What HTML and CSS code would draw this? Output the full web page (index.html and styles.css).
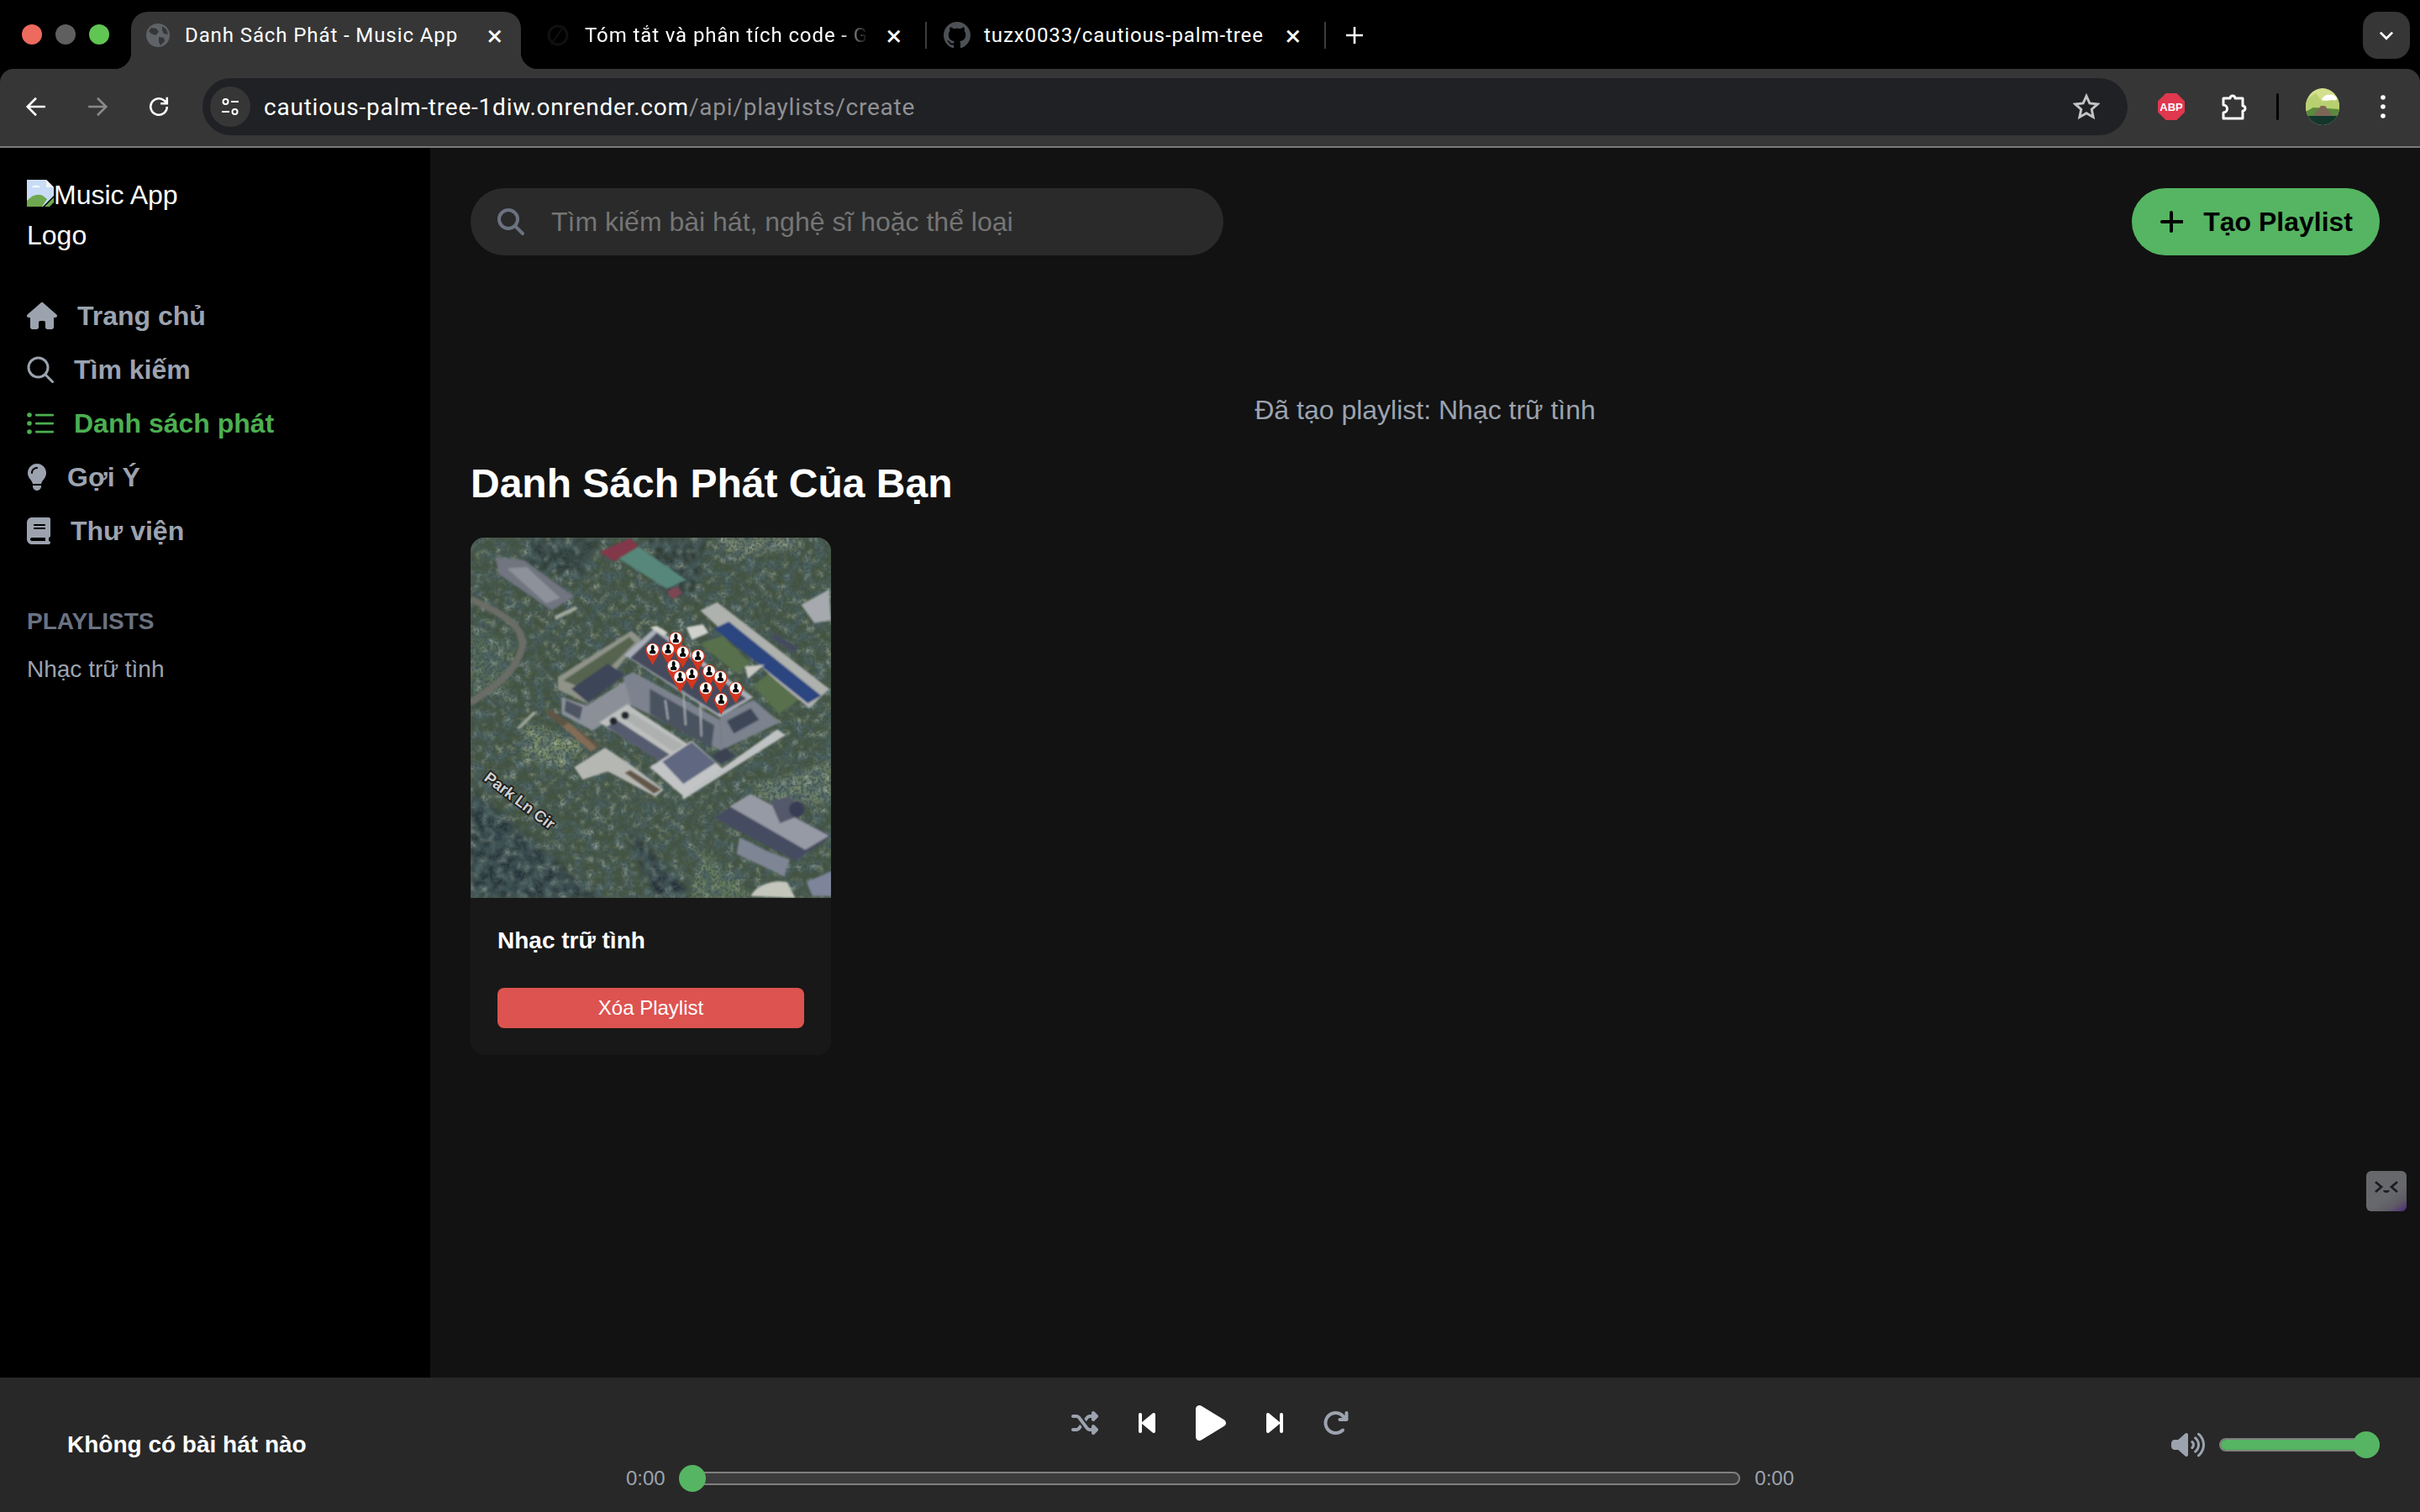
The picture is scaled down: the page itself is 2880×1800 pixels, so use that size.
FILE: index.html
```html
<!DOCTYPE html>
<html>
<head>
    <title>Danh Sách Phát - Music App</title>
    <link rel="stylesheet" href="styles.css">
</head>
<body>
    <div class="tabstrip">
        <div class="lights">
            <span class="light red"></span>
            <span class="light gray"></span>
            <span class="light green"></span>
        </div>
        <div class="tab active">
            <svg class="favicon" viewBox="0 0 28 28"><circle cx="14" cy="14" r="14" fill="#5f6368"/><path d="M6 5l6 1 3 4-4 4-5-2-3-3zM15 16l6 1 1 4-5 5-2-4zM19 3l5 4 2 6-5-1-2-4z" fill="#363636"/></svg>
            <span class="tab-title">Danh Sách Phát - Music App</span>
            <span class="tab-close">×</span>
        </div>
        <div class="tab second">
            <svg class="favicon" viewBox="0 0 28 28"><circle cx="14" cy="14" r="11" fill="none" stroke="#101010" stroke-width="3"/><path d="M6 25L21 3" stroke="#101010" stroke-width="2"/></svg>
            <span class="tab-title faded">Tóm tắt và phân tích code - G</span>
            <span class="tab-close">×</span>
        </div>
        <div class="tab third">
            <svg class="favicon github" viewBox="0 0 16 16"><path fill="#4d5055" d="M8 0C3.58 0 0 3.58 0 8c0 3.54 2.29 6.53 5.47 7.59.4.07.55-.17.55-.38 0-.19-.01-.82-.01-1.49-2.01.37-2.53-.49-2.69-.94-.09-.23-.48-.94-.82-1.13-.28-.15-.68-.52-.01-.53.63-.01 1.08.58 1.23.82.72 1.21 1.87.87 2.33.66.07-.52.28-.87.51-1.07-1.78-.2-3.64-.89-3.64-3.95 0-.87.31-1.59.82-2.15-.08-.2-.36-1.02.08-2.12 0 0 .67-.21 2.2.82.64-.18 1.32-.27 2-.27.68 0 1.36.09 2 .27 1.53-1.04 2.2-.82 2.2-.82.44 1.1.16 1.92.08 2.12.51.56.82 1.27.82 2.15 0 3.07-1.87 3.75-3.65 3.95.29.25.54.73.54 1.48 0 1.07-.01 1.93-.01 2.2 0 .21.15.46.55.38A8.013 8.013 0 0016 8c0-4.42-3.58-8-8-8z"/></svg>
            <span class="tab-title">tuzx0033/cautious-palm-tree</span>
            <span class="tab-close">×</span>
        </div>
        <svg class="new-tab" viewBox="0 0 20 20"><path d="M10 0v20M0 10h20" stroke="#fff" stroke-width="2.600" fill="none"/></svg>
        <div class="tab-menu">
            <svg viewBox="0 0 16 10"><path d="M1.500 1.500L8 8l6.500-6.500" stroke="#fff" stroke-width="2.400" fill="none"/></svg>
        </div>
    </div>

    <div class="toolbar">
        <svg class="nav-btn" viewBox="0 0 24 24"><path d="M22 12H3M12 2.500L2.500 12l9.500 9.500" stroke="#fff" stroke-width="2.400" fill="none"/></svg>
        <svg class="nav-btn" viewBox="0 0 24 24"><path d="M2 12h19M12 2.500l9.500 9.500-9.500 9.500" stroke="#8a8a8a" stroke-width="2.400" fill="none"/></svg>
        <svg class="nav-btn" viewBox="0 0 24 24"><path d="M21 12a9 9 0 1 1-3-6.700L21 8M21 1.500V8.500h-7" stroke="#fff" stroke-width="2.400" fill="none"/></svg>
        <div class="urlbar">
            <span class="site-info">
                <svg viewBox="0 0 24 24"><circle cx="6.500" cy="6" r="3" fill="none" stroke="#fff" stroke-width="2"/><path d="M13 6h9M2 18h9" stroke="#fff" stroke-width="2.200"/><circle cx="17.500" cy="18" r="3" fill="none" stroke="#fff" stroke-width="2"/></svg>
            </span>
            <span class="url">cautious-palm-tree-1diw.onrender.com<span class="url-path">/api/playlists/create</span></span>
            <svg class="star" viewBox="0 0 24 24"><path d="M12 2.500l2.900 6.400 7 .8-5.200 4.700 1.400 6.900-6.100-3.500-6.100 3.500 1.400-6.900L2.100 9.700l7-.8z" fill="none" stroke="#c4c4c4" stroke-width="2.200"/></svg>
        </div>
        <div class="abp">ABP</div>
        <svg class="puzzle" viewBox="0 0 32 32"><path d="M4 6h8a3 3 0 0 1 6 0h9v9a3 3 0 0 1 0 6v9H4v-7a4 4 0 0 0 0-9z" fill="none" stroke="#fff" stroke-width="3" stroke-linejoin="round"/></svg>
        <span class="tool-sep"></span>
        <svg class="avatar" viewBox="0 0 40 44">
            <clipPath id="avatarClip"><ellipse cx="20" cy="22" rx="20" ry="22"/></clipPath>
            <g clip-path="url(#avatarClip)">
                <rect width="40" height="44" fill="#d4e08e"/>
                <path d="M0 14l12-8 8 10 20-6v20H0z" fill="#b8d070"/>
                <path d="M19 14c2-5 6-7 9-6 4-1 8 1 9 4 1 2-2 3-6 2l-6 1z" fill="#fff"/>
                <path d="M0 28l9-5 31 2v14H0z" fill="#5a8a3c"/>
                <path d="M8 34l10-13h5l10 13z" fill="#7c6757"/>
                <rect y="33" width="40" height="11" fill="#14352c"/>
            </g>
        </svg>
        <svg class="more" viewBox="0 0 6 30"><circle cx="3" cy="4" r="2.800" fill="#fff"/><circle cx="3" cy="15" r="2.800" fill="#fff"/><circle cx="3" cy="26" r="2.800" fill="#fff"/></svg>
    </div>

    <div class="app">
        <aside class="sidebar">
            <div class="logo">
                <svg class="broken-img" viewBox="0 0 32 32"><path d="M0 0h23l9 9v23H0z" fill="#c9dcf5"/><path d="M0 25c6-7 13-9 19-6l5 4-6 9H0z" fill="#6fa84f"/><path d="M23 0v9h9z" fill="#f4f4f4"/><path d="M6 9c1-3 8-3 10 0z" fill="#fff"/><path d="M32 19L19 32h13z" fill="#000"/><path d="M32 21L21 32h6l5-5z" fill="#6fa84f"/></svg>Music App Logo
            </div>
            <nav class="nav">
                <a class="nav-item">
                    <svg class="nav-icon" width="36" height="32" viewBox="0 0 576 512"><path d="M575.8 255.5c0 18-15 32.1-32 32.1h-32l.7 160.2c0 2.7-.2 5.4-.5 8.1V472c0 22.1-17.9 40-40 40H456c-1.1 0-2.2 0-3.3-.1c-1.4 .1-2.8 .1-4.2 .1H416 392c-22.1 0-40-17.900-40-40V448 384c0-17.700-14.300-32-32-32H256c-17.700 0-32 14.300-32 32v64 24c0 22.100-17.900 40-40 40H160 128.100c-1.500 0-3-.1-4.500-.2c-1.200 .1-2.400 .2-3.600 .2H104c-22.100 0-40-17.900-40-40V360c0-.9 0-1.900 .1-2.800V287.600H32c-18 0-32-14-32-32.100c0-9 3-17 10-24L266.400 8c7-7 15-8 22-8s15 2 21 7L564.800 231.500c8 7 12 15 11 24z"/></svg>
                    Trang chủ
                </a>
                <a class="nav-item">
                    <svg class="nav-icon stroked" width="32" height="32" viewBox="0 0 32 32"><circle cx="13.500" cy="13.500" r="11.500"/><path d="M22 22l8.500 8.500"/></svg>
                    Tìm kiếm
                </a>
                <a class="nav-item current">
                    <svg class="nav-icon" width="32" height="32" viewBox="0 0 32 32"><circle cx="3" cy="6" r="2.800"/><circle cx="3" cy="16" r="2.800"/><circle cx="3" cy="26" r="2.800"/><rect x="10" y="4.700" width="22" height="2.800" rx="1"/><rect x="10" y="14.700" width="22" height="2.800" rx="1"/><rect x="10" y="24.700" width="22" height="2.800" rx="1"/></svg>
                    Danh sách phát
                </a>
                <a class="nav-item">
                    <svg class="nav-icon" width="24" height="32" viewBox="0 0 384 512"><path d="M272 384c9.600-31.900 29.500-59.100 49.200-86.200l0 0c5.200-7.100 10.400-14.200 15.400-21.400c19.800-28.500 31.400-63 31.400-100.300C368 78.800 289.200 0 192 0S16 78.800 16 176c0 37.300 11.600 71.900 31.400 100.300c5 7.200 10.200 14.300 15.400 21.400l0 0c19.800 27.100 39.700 54.400 49.200 86.200H272zM192 512c44.200 0 80-35.800 80-80V416H112v16c0 44.200 35.800 80 80 80zM112 176c0 8.800-7.200 16-16 16s-16-7.200-16-16c0-61.900 50.100-112 112-112c8.800 0 16 7.200 16 16s-7.200 16-16 16c-44.200 0-80 35.800-80 80z"/></svg>
                    Gợi Ý
                </a>
                <a class="nav-item">
                    <svg class="nav-icon" width="28" height="32" viewBox="0 0 448 512"><path d="M96 0C43 0 0 43 0 96V416c0 53 43 96 96 96H384h32c17.700 0 32-14.300 32-32s-14.300-32-32-32V384c17.700 0 32-14.300 32-32V32c0-17.700-14.300-32-32-32H384 96zm0 384H352v64H96c-17.700 0-32-14.300-32-32s14.300-32 32-32zm32-240c0-8.800 7.200-16 16-16H336c8.800 0 16 7.200 16 16s-7.200 16-16 16H144c-8.800 0-16-7.200-16-16zm16 48H336c8.800 0 16 7.200 16 16s-7.200 16-16 16H144c-8.800 0-16-7.200-16-16s7.200-16 16-16z"/></svg>
                    Thư viện
                </a>
            </nav>
            <h3 class="side-title">PLAYLISTS</h3>
            <a class="side-link">Nhạc trữ tình</a>
        </aside>

        <main class="main">
            <div class="topbar">
                <div class="search">
                    <svg class="search-icon" viewBox="0 0 512 512"><path d="M416 208c0 45.900-14.900 88.300-40 122.700L502.600 457.400c12.500 12.500 12.500 32.800 0 45.300s-32.800 12.500-45.300 0L330.700 376c-34.400 25.200-76.800 40-122.700 40C93.100 416 0 322.900 0 208S93.100 0 208 0S416 93.100 416 208zM208 352a144 144 0 1 0 0-288 144 144 0 1 0 0 288z"/></svg>
                    <span class="placeholder">Tìm kiếm bài hát, nghệ sĩ hoặc thể loại</span>
                </div>
                <button class="create-btn">
                    <svg width="28" height="32" viewBox="0 0 448 512"><path d="M256 80c0-17.700-14.300-32-32-32s-32 14.300-32 32V224H48c-17.700 0-32 14.300-32 32s14.300 32 32 32H192V432c0 17.700 14.300 32 32 32s32-14.300 32-32V288H432c17.700 0 32-14.300 32-32s-14.300-32-32-32H256V80z"/></svg>
                    Tạo Playlist
                </button>
            </div>

            <p class="message">Đã tạo playlist: Nhạc trữ tình</p>
            <h2 class="page-title">Danh Sách Phát Của Bạn</h2>

            <div class="card">
                <svg class="cover" viewBox="60 60 1287 1287">
                    <defs>
                        <filter id="darkClumps" x="0" y="0" width="100%" height="100%">
                            <feTurbulence type="fractalNoise" baseFrequency="0.028" numOctaves="3" seed="7"/>
                            <feColorMatrix values="0 0 0 0 0.07  0 0 0 0 0.12  0 0 0 0 0.12  3.500 0 0 0 -1.450"/>
                            <feGaussianBlur stdDeviation="4"/>
                        </filter>
                        <filter id="lightClumps" x="0" y="0" width="100%" height="100%">
                            <feTurbulence type="fractalNoise" baseFrequency="0.04" numOctaves="3" seed="21"/>
                            <feColorMatrix values="0 0 0 0 0.50  0 0 0 0 0.56  0 0 0 0 0.46  0 3.500 0 0 -1.850"/>
                            <feGaussianBlur stdDeviation="4"/>
                        </filter>
                        <filter id="grain" x="0" y="0" width="100%" height="100%">
                            <feTurbulence type="fractalNoise" baseFrequency="0.1" numOctaves="2" seed="4"/>
                            <feColorMatrix values="0 0 0 0 0.05  0 0 0 0 0.08  0 0 0 0 0.08  4 0 0 0 -1.700"/>
                            <feGaussianBlur stdDeviation="2"/>
                        </filter>
                        <filter id="soft"><feGaussianBlur stdDeviation="3.500"/></filter>
                        <filter id="softer"><feGaussianBlur stdDeviation="12"/></filter>
                        <g id="pin">
                            <path d="M-25 2a25 25 0 1 1 50 0c0 16-15 32-25 54C-10 34-25 18-25 2z" fill="#d3361f"/>
                            <circle r="21" fill="#fff"/>
                            <path d="M-6-9a6 8 0 0 1 12 0c0 5-1 8-2 10 2 2 6 3 7 7l-1 7h-20l-1-7c1-4 5-5 7-7-1-2-2-5-2-10z" fill="#000"/>
                        </g>
                    </defs>
                    <rect x="60" y="60" width="1287" height="1287" fill="#45553f"/>
                    <g filter="url(#softer)">
                        <path d="M60 960L520 1347H60z" fill="#27363a"/>
                        <path d="M250 720l220 70-70 100-150-40z" fill="#7a8c68"/>
                        <path d="M620 1100l240 247H720z" fill="#232f38"/>
                        <path d="M1060 950l287-90v150l-200 10z" fill="#6e8067"/>
                        <path d="M930 60h300v40l-240 20z" fill="#7f8a72"/>
                        <path d="M900 1180l160 167h-220z" fill="#667c5a"/>
                        <path d="M60 380l160 60-30 170-130 30z" fill="#566a54"/>
                        <path d="M250 60h270l-60 150-200-40z" fill="#2f3e38"/>
                        <path d="M680 60h220l-30 200-120 10z" fill="#2d3a34"/>
                    </g>
                    <rect x="60" y="60" width="1287" height="1287" filter="url(#darkClumps)"/>
                    <rect x="60" y="60" width="1287" height="1287" filter="url(#lightClumps)" opacity="0.6"/>
                    <rect x="60" y="60" width="1287" height="1287" filter="url(#grain)" opacity="0.7"/>
                    <g filter="url(#soft)">
                        <path d="M60 650c70-50 160-100 185-200 10-70-70-120-185-170" fill="none" stroke="#6a6d66" stroke-width="24"/>
                        <path d="M150 130l100 10 180 130-80 50-190-130z" fill="#6f757f"/>
                        <path d="M190 170l70-5 120 110-50 20z" fill="#8d929a"/>
                        <path d="M520 112l110-50 30 28-88 55z" fill="#823748"/>
                        <path d="M590 135l70-42 170 118-70 32z" fill="#56877a"/>
                        <path d="M760 250l40-15 15 25-35 20z" fill="#7e4552"/>
                        <path d="M1240 300l100-55 7 110-60 10z" fill="#a6aaae"/>
                        <path d="M225 740l60-60 10 6-60 58z" fill="#a2a89c"/>
                        <path d="M360 340l75-35 8 10-80 40z" fill="#a2a89c"/>

                        <path d="M880 440l80-30 100 100-50 35z" fill="#586f4b"/>
                        <path d="M1070 590l60-50 100 100-70 50z" fill="#586f4b"/>
                        <path d="M880 320l60-30 400 310-70 70-120-100z" fill="#aeb1ad"/>
                        <path d="M930 385l52-25 330 265-48 27z" fill="#2c4580"/>
                        <path d="M1140 400l90 50-10 25-80-50z" fill="#454c5f"/>
                        <path d="M1040 520l70-6-60 50z" fill="#c8c8c2"/>

                        <path d="M372 558l262-165 36 30-190 230-108-50z" fill="#8f9388"/>
                        <path d="M392 570l235-155 20 20-170 170z" fill="#55644f"/>
                        <path d="M420 600l130-90 60 40-130 100z" fill="#3d4459"/>
                        <path d="M385 630l90 30 170-110 20 90-170 110-110-60z" fill="#8b9098"/>
                        <path d="M400 640l60 25-10 45-55-30z" fill="#4e5464"/>
                        <path d="M340 670l180 130-20 20-170-130z" fill="#5f5445"/>
                        <path d="M410 720l100 90-20 15-100-90z" fill="#836c57"/>

                        <path d="M610 480l110-100 350 250-120 72z" fill="#a8aeb8"/>
                        <path d="M630 490l95-90 320 235-100 55z" fill="#444c5c"/>
                        <path d="M640 540l310 170 5 110-60-30-260-130-30-100z" fill="#7d838e"/>
                        <path d="M700 600l230 130-10 80-220-120z" fill="#4a5261"/>
                        <path d="M820 610l8 120M880 650l4 120M755 640l10 70" stroke="#a8adb4" stroke-width="6"/>
                        <path d="M950 700l120-60 95 80-210 100z" fill="#7b828e"/>
                        <path d="M975 715l85-45 30 40-90 50z" fill="#3e4658"/>
                        <path d="M700 380l50 30 15-10-40-25z" fill="#d2d2cc"/>
                        <path d="M830 380l60-10 20 30-60 25z" fill="#d0d0cc"/>

                        <path d="M520 720l100-65 220 145-100 60z" fill="#bcbfbd"/>
                        <path d="M545 735l40-22 190 125-35 25z" fill="#575c70"/>
                        <path d="M605 705l30-18 185 115-35 22z" fill="#adb0ae"/>
                        <circle cx="570" cy="715" r="14" fill="#23262e"/>
                        <circle cx="612" cy="695" r="14" fill="#23262e"/>
                        <path d="M430 880l110-70 90 60 120 90-30 25-170-90-90 30z" fill="#b5b7b3"/>
                        <path d="M630 890l110 70-25 15-105-75z" fill="#64564a"/>
                        <path d="M700 880l150-95 110 100-140 100z" fill="#c2c4c6"/>
                        <path d="M745 860l105-70 85 75-115 75z" fill="#5f6880"/>
                        <path d="M815 985l340-240 30 20-365 230z" fill="#bfc2c2"/>
                        <path d="M920 840l50-30 35 30-50 30z" fill="#3c4353"/>

                        <path d="M930 1060l60-40 70-45 290 150-130 90z" fill="#454c60"/>
                        <path d="M985 1020l75-45 280 150-85 50z" fill="#969aa4"/>
                        <path d="M1130 1000l70-15 55 60-90 35z" fill="#53586a"/>
                        <circle cx="1225" cy="1030" r="28" fill="#383e52"/>
                        <path d="M1020 1130l100 50 80 30-20 60-170-80z" fill="#7e8594"/>
                        <path d="M1060 1340c20-40 80-60 130-50l30 57z" fill="#c4c6bc"/>
                        <path d="M1260 1290l90-40v90h-70z" fill="#7e849a"/>
                    </g>
                    <use href="#pin" x="793" y="420"/>
                    <use href="#pin" x="710" y="460"/>
                    <use href="#pin" x="765" y="458"/>
                    <use href="#pin" x="818" y="470"/>
                    <use href="#pin" x="872" y="482"/>
                    <use href="#pin" x="785" y="518"/>
                    <use href="#pin" x="912" y="537"/>
                    <use href="#pin" x="850" y="547"/>
                    <use href="#pin" x="808" y="558"/>
                    <use href="#pin" x="952" y="558"/>
                    <use href="#pin" x="1007" y="598"/>
                    <use href="#pin" x="900" y="598"/>
                    <use href="#pin" x="955" y="638"/>
                    <text class="map-label" transform="translate(105 925) rotate(37)">Park Ln Cir</text>
                </svg>
                <div class="card-body">
                    <h3 class="card-title">Nhạc trữ tình</h3>
                    <button class="delete-btn">Xóa Playlist</button>
                </div>
            </div>

            <div class="float-btn">
                <svg viewBox="0 0 48 48"><path d="M11 13l7 6-7 6M37 13l-7 6 7 6" fill="none" stroke="#1c1c22" stroke-width="2.800"/><path d="M20 23c1 4 7 4 8 0z" fill="#1c1c22"/></svg>
            </div>
        </main>
    </div>

    <footer class="player">
        <div class="now-playing">Không có bài hát nào</div>
        <div class="player-center">
            <div class="controls">
                <svg class="ctl muted" width="32" height="28" viewBox="0 32 512 448"><path d="M403.800 34.400c12-5 25.700-2.200 34.900 6.900l64 64c6 6 9.400 14.100 9.400 22.600s-3.400 16.600-9.400 22.600l-64 64c-9.200 9.200-22.900 11.900-34.900 6.900s-19.800-16.600-19.800-29.600V160H352c-10.100 0-19.600 4.700-25.600 12.800L284 229.300 244 176l31.200-41.600C293.300 110.200 321.800 96 352 96h32V64c0-12.900 7.800-24.600 19.800-29.600zM164 282.700L204 336l-31.200 41.600C154.700 401.800 126.200 416 96 416H32c-17.700 0-32-14.300-32-32s14.300-32 32-32H96c10.100 0 19.600-4.700 25.600-12.800L164 282.700zm274.600 188c-9.200 9.200-22.900 11.900-34.900 6.900s-19.800-16.600-19.800-29.600V416H352c-30.200 0-58.700-14.200-76.800-38.400L121.600 172.800c-6-8.100-15.500-12.800-25.600-12.800H32c-17.700 0-32-14.300-32-32s14.300-32 32-32H96c30.200 0 58.700 14.200 76.800 38.400L326.400 339.200c6 8.100 15.500 12.800 25.600 12.800h32V320c0-12.900 7.800-24.600 19.800-29.600s25.700-2.200 34.900 6.900l64 64c6 6 9.400 14.100 9.400 22.600s-3.400 16.600-9.400 22.600l-64 64z"/></svg>
                <svg class="ctl" width="20" height="24" viewBox="0 64 320 384"><path d="M267.500 440.600c9.500 7.900 22.800 9.700 34.100 4.400s18.400-16.600 18.400-29V96c0-12.400-7.200-23.700-18.400-29s-24.500-3.600-34.100 4.400l-192 160L64 241V96c0-17.700-14.300-32-32-32S0 78.300 0 96V416c0 17.700 14.300 32 32 32s32-14.300 32-32V271l11.500 9.600 192 160z"/></svg>
                <svg class="ctl" width="36" height="42" viewBox="0 32 384 448"><path d="M73 39c-14.800-9.100-33.400-9.400-48.500-.9S0 62.600 0 80V432c0 17.400 9.400 33.400 24.500 41.900s33.700 8.100 48.500-.9L361 297c14.300-8.700 23-24.200 23-41s-8.700-32.200-23-41L73 39z"/></svg>
                <svg class="ctl" width="20" height="24" viewBox="0 64 320 384"><path d="M52.500 440.600c-9.500 7.900-22.800 9.700-34.100 4.400S0 428.400 0 416V96C0 83.600 7.200 72.300 18.400 67s24.500-3.600 34.100 4.400l192 160L256 241V96c0-17.700 14.300-32 32-32s32 14.300 32 32V416c0 17.700-14.300 32-32 32s-32-14.300-32-32V271l-11.500 9.600-192 160z"/></svg>
                <svg class="ctl muted" width="30" height="28" viewBox="32 32 464 448"><path d="M386.300 160H336c-17.700 0-32 14.300-32 32s14.300 32 32 32H464c17.700 0 32-14.300 32-32V64c0-17.700-14.300-32-32-32s-32 14.300-32 32v51.200L414.400 97.600c-87.500-87.500-229.300-87.500-316.800 0s-87.500 229.300 0 316.800s229.300 87.500 316.800 0c12.500-12.500 12.500-32.800 0-45.300s-32.800-12.500-45.300 0c-62.500 62.500-163.800 62.500-226.300 0s-62.500-163.800 0-226.300s163.800-62.500 226.300 0L386.300 160z"/></svg>
            </div>
            <div class="progress">
                <span class="time">0:00</span>
                <div class="track">
                    <span class="thumb start"></span>
                </div>
                <span class="time">0:00</span>
            </div>
        </div>
        <div class="volume">
            <svg class="ctl muted" width="40" height="32" viewBox="0 0 640 512"><path d="M533.600 32.500C598.500 85.200 640 165.800 640 256s-41.500 170.700-106.400 223.500c-10.300 8.400-25.400 6.800-33.800-3.500s-6.800-25.400 3.500-33.800C557.500 398.200 592 331.200 592 256s-34.500-142.200-88.700-186.300c-10.300-8.400-11.800-23.500-3.500-33.800s23.500-11.800 33.800-3.500zM473.100 107c43.200 35.200 70.900 88.900 70.900 149s-27.700 113.800-70.900 149c-10.300 8.400-25.400 6.800-33.800-3.500s-6.800-25.400 3.500-33.800C475.300 341.300 496 301.100 496 256s-20.700-85.300-53.200-111.800c-10.300-8.400-11.800-23.500-3.500-33.800s23.500-11.800 33.800-3.500zm-60.500 74.500C434.100 199.100 448 225.900 448 256s-13.900 56.900-35.400 74.500c-10.300 8.400-25.400 6.800-33.800-3.500s-6.800-25.400 3.500-33.800C393.100 284.400 400 271 400 256s-6.900-28.400-17.700-37.300c-10.300-8.400-11.800-23.500-3.500-33.800s23.500-11.800 33.800-3.500zM301.100 34.800C312.600 40 320 51.400 320 64V448c0 12.600-7.400 24-18.900 29.200s-25 3.100-34.400-5.300L131.800 352H64c-35.300 0-64-28.700-64-64V224c0-35.300 28.700-64 64-64h67.800L266.700 40.100c9.400-8.400 22.900-10.400 34.400-5.300z"/></svg>
            <div class="track volume-track">
                <span class="volume-fill"></span>
                <span class="thumb end"></span>
            </div>
        </div>
    </footer>
</body>
</html>
```

FILE: styles.css
```css
* {
    box-sizing: border-box;
}

html, body {
    height: 100%;
}

body {
    margin: 0;
    display: flex;
    flex-direction: column;
    background-color: #000;
    color: #fff;
    font-family: "Liberation Sans", Arial, sans-serif;
    overflow: hidden;
}

/* browser chrome */
.tabstrip {
    display: flex;
    height: 82px;
    padding-top: 14px;
    background-color: #000;
    font-family: Roboto, "Liberation Sans", sans-serif;
    font-size: 24px;
    letter-spacing: 0.9px;
}

.lights {
    display: flex;
    gap: 16px;
    width: 156px;
    height: 54px;
    padding-left: 26px;
    align-items: center;
}

.light {
    width: 24px;
    height: 24px;
    border-radius: 50%;
}

.light.red { background-color: #ed6a5e; }
.light.gray { background-color: #5f5f5f; }
.light.green { background-color: #61c554; }

.tab {
    position: relative;
    display: flex;
    align-items: center;
    height: 56px;
}

.tab.active {
    width: 464px;
    height: 68px;
    padding: 0 22px 12px 18px;
    background-color: #363636;
    border-radius: 20px 20px 0 0;
}

.tab.active::before,
.tab.active::after {
    content: "";
    position: absolute;
    bottom: 0;
    width: 20px;
    height: 20px;
}

.tab.active::before {
    left: -20px;
    background: radial-gradient(circle at 0 0, transparent 20px, #363636 20.5px);
}

.tab.active::after {
    right: -20px;
    background: radial-gradient(circle at 100% 0, transparent 20px, #363636 20.5px);
}

.tab.second {
    width: 483px;
    padding: 0 30px 0 30px;
}

.tab.second::after,
.tab.third::after {
    content: "";
    position: absolute;
    right: 0;
    top: 12px;
    width: 2px;
    height: 32px;
    background-color: #3c3c3c;
}

.tab.third {
    width: 475px;
    padding: 0 30px 0 20px;
}

.favicon {
    flex: none;
    width: 28px;
    height: 28px;
    margin-right: 18px;
}

.favicon.github {
    width: 32px;
    height: 32px;
    margin-right: 16px;
}

.tab-title {
    white-space: nowrap;
}

.tab-title.faded {
    -webkit-mask-image: linear-gradient(to right, #000 90%, transparent);
    mask-image: linear-gradient(to right, #000 90%, transparent);
}

.tab-close {
    margin-left: auto;
    font-size: 34px;
    line-height: 34px;
    letter-spacing: 0;
}

.new-tab {
    width: 20px;
    height: 20px;
    margin: 18px 0 0 24px;
}

.tab-menu {
    display: flex;
    align-items: center;
    justify-content: center;
    width: 56px;
    height: 56px;
    margin-left: auto;
    margin-right: 12px;
    background-color: #363636;
    border-radius: 18px;
}

.tab-menu svg {
    width: 18px;
    height: 11px;
}

.toolbar {
    display: flex;
    align-items: center;
    height: 94px;
    flex: none;
    padding-left: 30px;
    padding-bottom: 2px;
    background-color: #363636;
    border-bottom: 2px solid #7a7a7a;
    border-radius: 16px 16px 0 0;
    font-family: Roboto, "Liberation Sans", sans-serif;
}

.nav-btn {
    width: 26px;
    height: 26px;
    margin-right: 47px;
}

.nav-btn:nth-child(3) {
    margin-right: 39px;
}

.urlbar {
    display: flex;
    align-items: center;
    width: 2291px;
    height: 68px;
    padding: 0 33px 0 9px;
    background-color: #202124;
    border-radius: 34px;
}

.site-info {
    display: flex;
    align-items: center;
    justify-content: center;
    width: 48px;
    height: 48px;
    background-color: #363636;
    border-radius: 50%;
}

.site-info svg {
    width: 24px;
    height: 24px;
}

.url {
    margin-left: 16px;
    font-size: 28px;
    letter-spacing: 0.78px;
    color: #fff;
}

.url-path {
    color: #8f9094;
}

.star {
    width: 32px;
    height: 32px;
    margin-left: auto;
}

.abp {
    display: flex;
    align-items: center;
    justify-content: center;
    width: 32px;
    height: 32px;
    margin-left: 36px;
    background-color: #e0384e;
    clip-path: polygon(30% 0, 70% 0, 100% 30%, 100% 70%, 70% 100%, 30% 100%, 0 70%, 0 30%);
    font-family: "Liberation Sans", sans-serif;
    font-size: 13px;
    font-weight: bold;
    color: #fff;
}

.puzzle {
    width: 32px;
    height: 32px;
    margin-left: 42px;
}

.tool-sep {
    width: 3px;
    height: 32px;
    margin-left: 35px;
    background-color: #000;
    border-radius: 2px;
}

.avatar {
    width: 40px;
    height: 44px;
    margin-left: 32px;
}

.more {
    width: 6px;
    height: 30px;
    margin-left: 49px;
}

/* app */
.app {
    flex: 1;
    display: flex;
    min-height: 0;
}

.sidebar {
    flex: none;
    width: 512px;
    padding: 32px 32px 0;
    background-color: #000;
}

.logo {
    width: 200px;
    font-size: 32px;
    line-height: 48px;
    color: #fff;
}

.broken-img {
    width: 32px;
    height: 32px;
    vertical-align: -3px;
}

.nav {
    display: flex;
    flex-direction: column;
    gap: 16px;
    margin-top: 48px;
}

.nav-item {
    display: flex;
    align-items: center;
    height: 48px;
    font-size: 32px;
    font-weight: bold;
    color: #9ca3af;
}

.nav-item.current {
    color: #4caf50;
}

.nav-icon {
    flex: none;
    margin-right: 24px;
    fill: currentColor;
}

.nav-icon.stroked {
    fill: none;
    stroke: currentColor;
    stroke-width: 3;
    stroke-linecap: round;
}

.side-title {
    margin: 63px 0 0;
    font-size: 28px;
    line-height: 42px;
    font-weight: bold;
    color: #6b7280;
}

.side-link {
    display: block;
    margin-top: 15px;
    font-size: 28px;
    line-height: 42px;
    color: #9ca3af;
}

.main {
    position: relative;
    flex: 1;
    padding: 48px;
    background-color: #121212;
}

.topbar {
    display: flex;
    justify-content: space-between;
}

.search {
    display: flex;
    align-items: center;
    width: 896px;
    height: 80px;
    padding-left: 32px;
    background-color: #2a2a2a;
    border-radius: 40px;
}

.search-icon {
    width: 32px;
    height: 32px;
    margin-right: 32px;
    fill: #6b7280;
}

.placeholder {
    font-size: 32px;
    color: #757575;
}

.create-btn {
    display: flex;
    align-items: center;
    gap: 24px;
    height: 80px;
    padding: 0 32px 0 33px;
    background-color: #55b562;
    border: none;
    border-radius: 40px;
    font-family: inherit;
    font-size: 32px;
    font-weight: bold;
    color: #000;
}

.message {
    margin: 160px 0 0;
    text-align: center;
    font-size: 32px;
    line-height: 48px;
    color: #9ca3af;
}

.page-title {
    margin: 32px 0 0;
    font-size: 48px;
    line-height: 64px;
    font-weight: bold;
    color: #fff;
}

.card {
    width: 429px;
    margin-top: 32px;
    background-color: #181818;
    border-radius: 16px;
    overflow: hidden;
}

.cover {
    display: block;
    width: 429px;
    height: 429px;
}

.map-label {
    font-family: "Liberation Sans", sans-serif;
    font-size: 56px;
    font-weight: bold;
    fill: #cfcfcf;
    stroke: #1c1c1c;
    stroke-width: 10px;
    paint-order: stroke;
}

.card-body {
    padding: 33px 32px 32px;
}

.card-title {
    margin: 0;
    font-size: 28px;
    line-height: 36px;
    font-weight: bold;
    color: #fff;
}

.delete-btn {
    display: block;
    width: 365px;
    height: 48px;
    margin-top: 38px;
    background-color: #dd5350;
    border: none;
    border-radius: 8px;
    font-family: inherit;
    font-size: 24px;
    color: #fff;
}

.float-btn {
    position: absolute;
    right: 16px;
    top: 1218px;
    width: 48px;
    height: 48px;
    background: linear-gradient(145deg, #66686c 60%, #5f5a66 80%, #4b2a78);
    border-radius: 6px;
}

.float-btn svg {
    display: block;
}

/* player */
.player {
    flex: none;
    display: flex;
    height: 160px;
    background-color: #282828;
}

.now-playing {
    flex: none;
    width: 745px;
    align-self: center;
    padding-left: 80px;
    font-size: 28px;
    font-weight: bold;
}

.player-center {
    flex: none;
    display: flex;
    flex-direction: column;
    align-items: center;
    width: 1390px;
    padding-top: 33px;
}

.controls {
    display: flex;
    align-items: center;
    gap: 48px;
}

.ctl {
    fill: #fff;
}

.ctl.muted {
    fill: #9ca3af;
}

.progress {
    display: flex;
    align-items: center;
    gap: 17px;
    width: 100%;
    margin-top: 31px;
}

.time {
    font-size: 24px;
    color: #9ca3af;
}

.track {
    position: relative;
    flex: 1;
    height: 16px;
    background-color: #3c3c3c;
    border: 2px solid #808080;
    border-radius: 8px;
}

.thumb {
    position: absolute;
    top: -10px;
    width: 32px;
    height: 32px;
    background-color: #55b562;
    border-radius: 50%;
}

.thumb.start { left: -3px; }
.thumb.end { right: -2px; }

.volume {
    flex: none;
    width: 745px;
    display: flex;
    align-items: center;
    justify-content: flex-end;
    gap: 17px;
    padding-right: 48px;
}

.volume-track {
    flex: none;
    width: 191px;
}

.volume-fill {
    display: block;
    height: 100%;
    margin-right: 10px;
    background-color: #55b562;
    border-radius: 6px;
}
```
